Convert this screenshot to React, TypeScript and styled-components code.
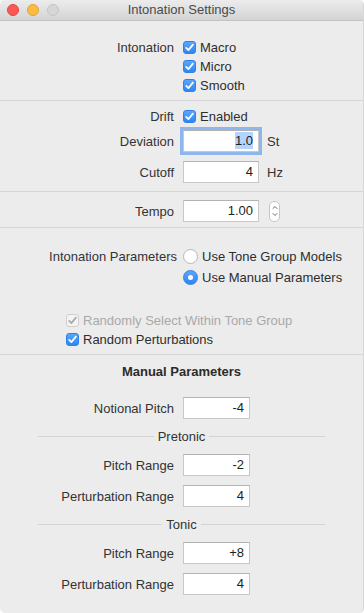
import styled, { createGlobalStyle } from 'styled-components';

const GlobalStyle = createGlobalStyle`
  html, body {
    margin: 0;
    padding: 0;
    background: #ffffff;
  }
  * {
    box-sizing: border-box;
  }
`;

function CheckMark({ color }: { color: string }) {
  return (
    <svg width='13' height='13' viewBox='0 0 13 13'>
      <path d='M3.2 6.8 L5.4 9.1 L9.9 3.6' fill='none' stroke={color} strokeWidth='1.7' strokeLinecap='round' strokeLinejoin='round' />
    </svg>
  );
}

function Checkbox({ label, disabled }: { label: string, disabled?: boolean }) {
  return (
    <Option disabled={disabled}>
      <CheckBox disabled={disabled}>
        <CheckMark color={disabled ? '#a8a8a8' : '#ffffff'} />
      </CheckBox>
      {label}
    </Option>
  );
}

function Radio({ label, selected }: { label: string, selected?: boolean }) {
  return (
    <Option>
      <RadioCircle selected={selected} />
      {label}
    </Option>
  );
}

function Stepper() {
  return (
    <StepperBox>
      <svg width='8' height='18' viewBox='0 0 8 18'>
        <path d='M2 6.5 L4 4.5 L6 6.5' fill='none' stroke='#6a6a6a' strokeWidth='1' strokeLinecap='round' />
        <path d='M2 11.5 L4 13.5 L6 11.5' fill='none' stroke='#6a6a6a' strokeWidth='1' strokeLinecap='round' />
      </svg>
    </StepperBox>
  );
}

function ManualField({ label, value }: { label: string, value: string }) {
  return (
    <FieldRow>
      <Label>{label}</Label>
      <TextField width={67}>{value}</TextField>
    </FieldRow>
  );
}

function App() {
  return (
    <>
      <GlobalStyle />
      <Window>
        <TitleBar>
          <Lights>
            <Light color='#fc5753' edge='#de4643' />
            <Light color='#fdbc40' edge='#dea236' />
            <Light color='#d6d6d6' edge='#c3c3c3' />
          </Lights>
          <Title>Intonation Settings</Title>
        </TitleBar>

        <Section top={17} bottom={5}>
          <FieldRow>
            <StackLabel>Intonation</StackLabel>
            <OptionStack>
              <Checkbox label='Macro' />
              <Checkbox label='Micro' />
              <Checkbox label='Smooth' />
            </OptionStack>
          </FieldRow>
        </Section>

        <Section top={6} bottom={8} gap={4}>
          <FieldRow>
            <Label>Drift</Label>
            <Checkbox label='Enabled' />
          </FieldRow>
          <FieldRow>
            <Label>Deviation</Label>
            <Controls>
              <TextField width={76} focused>
                <Selected>1.0</Selected>
              </TextField>
              <Unit>St</Unit>
            </Controls>
          </FieldRow>
          <Spacer height={1} />
          <FieldRow>
            <Label>Cutoff</Label>
            <Controls>
              <TextField width={76}>4</TextField>
              <Unit>Hz</Unit>
            </Controls>
          </FieldRow>
        </Section>

        <Section top={8} bottom={5}>
          <FieldRow>
            <Label>Tempo</Label>
            <Controls gap={10}>
              <TextField width={76}>1.00</TextField>
              <Stepper />
            </Controls>
          </FieldRow>
        </Section>

        <Section top={18} bottom={5}>
          <FieldRow>
            <StackLabel tall>Intonation Parameters</StackLabel>
            <OptionStack tall>
              <Radio label='Use Tone Group Models' />
              <Radio label='Use Manual Parameters' selected />
            </OptionStack>
          </FieldRow>
          <Spacer height={23} />
          <IndentedOptions>
            <Checkbox label='Randomly Select Within Tone Group' disabled />
            <Checkbox label='Random Perturbations' />
          </IndentedOptions>
        </Section>

        <Section top={9} bottom={18} last>
          <Heading>Manual Parameters</Heading>
          <Spacer height={17} />
          <ManualField label='Notional Pitch' value='-4' />
          <GroupDivider>
            <Rule />
            <GroupName>Pretonic</GroupName>
            <Rule />
          </GroupDivider>
          <ManualField label='Pitch Range' value='-2' />
          <Spacer height={9} />
          <ManualField label='Perturbation Range' value='4' />
          <GroupDivider>
            <Rule />
            <GroupName>Tonic</GroupName>
            <Rule />
          </GroupDivider>
          <ManualField label='Pitch Range' value='+8' />
          <Spacer height={9} />
          <ManualField label='Perturbation Range' value='4' />
        </Section>
      </Window>
    </>
  );
}

const Window = styled.div`
  width: 364px;
  height: 613px;
  background: #ececec;
  border-radius: 5px;
  overflow: hidden;
  display: flex;
  flex-direction: column;
  font-family: 'Liberation Sans', Arial, sans-serif;
  font-size: 13px;
  color: #2e2e2e;
  border-right: 1px solid #d6d6d6;
`;

const TitleBar = styled.div`
  height: 21px;
  flex-shrink: 0;
  display: grid;
  grid-template-columns: 1fr;
  align-items: center;
  background: linear-gradient(#ececec, #d4d4d4);
  border-bottom: 1px solid #c2c2c2;
  position: relative;
`;

const Lights = styled.div`
  position: absolute;
  left: 7px;
  top: 4px;
  display: flex;
  gap: 8px;
`;

const Light = styled.span<{ color: string, edge: string }>`
  width: 12px;
  height: 12px;
  border-radius: 50%;
  background: ${props => props.color};
  border: 0.5px solid ${props => props.edge};
`;

const Title = styled.div`
  text-align: center;
  color: #4a4a4a;
  font-size: 13px;
  line-height: 20px;
`;

const Section = styled.div<{ top: number, bottom: number, gap?: number, last?: boolean }>`
  display: flex;
  flex-direction: column;
  gap: ${props => props.gap ?? 0}px;
  padding: ${props => props.top}px 0 ${props => props.bottom}px;
  border-bottom: ${props => props.last ? 'none' : '1px solid #d7d7d7'};
  flex-grow: ${props => props.last ? 1 : 0};
`;

const FieldRow = styled.div`
  display: grid;
  grid-template-columns: 174px 1fr;
  column-gap: 9px;
  align-items: center;
`;

const Label = styled.div`
  text-align: right;
  white-space: nowrap;
  color: #333;
`;

const StackLabel = styled(Label)<{ tall?: boolean }>`
  align-self: start;
  line-height: ${props => props.tall ? 21 : 19}px;
  margin-right: ${props => props.tall ? -3 : 0}px;
`;

const OptionStack = styled.div<{ tall?: boolean }>`
  display: grid;
  grid-auto-rows: ${props => props.tall ? 21 : 19}px;
  align-items: center;
`;

const Option = styled.label<{ disabled?: boolean }>`
  display: flex;
  align-items: center;
  gap: 4px;
  height: 19px;
  white-space: nowrap;
  color: ${props => props.disabled ? '#a9a9a9' : '#2e2e2e'};
`;

const CheckBox = styled.span<{ disabled?: boolean }>`
  width: 13px;
  height: 13px;
  border-radius: 3px;
  display: flex;
  background: ${props => props.disabled ? '#f4f4f4' : 'linear-gradient(#5aa6fb, #2d86f5)'};
  border: 1px solid ${props => props.disabled ? '#cfcfcf' : '#2f80e8'};
  align-items: center;
  justify-content: center;
  svg {
    margin: -1px;
  }
`;

const RadioCircle = styled.span<{ selected?: boolean }>`
  width: 15px;
  height: 15px;
  border-radius: 50%;
  background: ${props => props.selected ? 'linear-gradient(#5aa6fb, #2d86f5)' : '#ffffff'};
  border: 1px solid ${props => props.selected ? '#2f80e8' : '#b7b7b7'};
  display: flex;
  align-items: center;
  justify-content: center;
  &::after {
    content: '';
    display: ${props => props.selected ? 'block' : 'none'};
    width: 5px;
    height: 5px;
    border-radius: 50%;
    background: #fff;
  }
`;

const Controls = styled.div<{ gap?: number }>`
  display: flex;
  align-items: center;
  gap: ${props => props.gap ?? 8}px;
`;

const TextField = styled.div<{ width: number, focused?: boolean }>`
  width: ${props => props.width}px;
  height: 22px;
  background: #fff;
  border: 1px solid #c8c8c8;
  border-top-color: #b3b3b3;
  text-align: right;
  padding-right: 5px;
  line-height: 20px;
  color: #1e1e1e;
  box-shadow: ${props => props.focused ? '0 0 0 3px #8db6ec' : 'none'};
`;

const Selected = styled.span`
  background: #b3d5fd;
  padding: 1px 0;
`;

const Unit = styled.span`
  color: #333;
`;

const StepperBox = styled.div`
  width: 11px;
  height: 21px;
  background: #fff;
  border: 1px solid #c6c6c6;
  border-radius: 5px;
  display: flex;
  align-items: center;
  justify-content: center;
`;

const Spacer = styled.div<{ height: number }>`
  height: ${props => props.height}px;
  flex-shrink: 0;
`;

const IndentedOptions = styled.div`
  display: flex;
  flex-direction: column;
  padding-left: 66px;
`;

const Heading = styled.div`
  text-align: center;
  font-weight: 700;
  line-height: 16px;
  color: #2b2b2b;
`;

const GroupDivider = styled.div`
  display: flex;
  align-items: center;
  margin: 9px 38px 10px 38px;
  height: 16px;
`;

const Rule = styled.div`
  flex: 1;
  height: 1px;
  background: #d3d3d3;
`;

const GroupName = styled.span`
  padding: 0 4px;
  color: #333;
`;

export default App;
